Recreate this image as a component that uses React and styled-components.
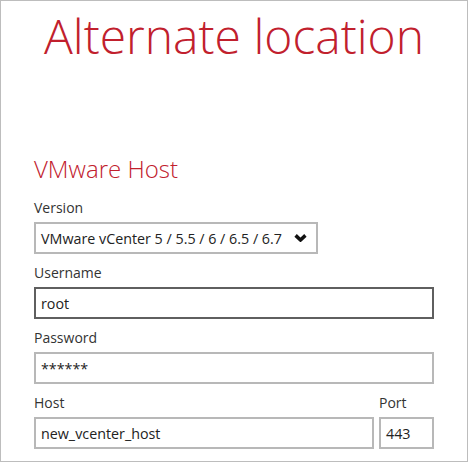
import React from "react";
import styled, { createGlobalStyle } from "styled-components";

const GlobalStyle = createGlobalStyle`
  html, body {
    margin: 0;
    padding: 0;
    background: #ffffff;
  }
  body {
    font-family: "Open Sans", "DejaVu Sans", sans-serif;
    color: #333333;
  }
`;

const Frame = styled.div`
  box-sizing: border-box;
  width: 468px;
  height: 462px;
  border: 1px solid #bdbdbd;
  padding: 7px 33px 0;
  display: flex;
  flex-direction: column;
  overflow: hidden;
`;

const Title = styled.h1`
  margin: 0;
  font-size: 48px;
  line-height: 56px;
  font-weight: 300;
  color: #c1202d;
  text-align: center;
`;

const SectionTitle = styled.h2`
  margin: 90px 0 14px;
  font-size: 24px;
  line-height: 30px;
  font-weight: 300;
  color: #c1202d;
`;

const Row = styled.div`
  display: flex;
  gap: 5px;
  margin-bottom: 9px;
`;

const Field = styled.div`
  display: flex;
  flex-direction: column;
  width: ${(p) => p.$width}px;
`;

const Label = styled.label`
  font-size: 14px;
  line-height: 20px;
  margin-bottom: 4px;
  color: #333333;
`;

const Box = styled.div`
  box-sizing: border-box;
  height: 32px;
  border: 2px solid ${(p) => (p.$focused ? "#5f5f5f" : "#b8b8b8")};
  padding: 0 5px;
  display: flex;
  align-items: center;
  justify-content: space-between;
  font-size: 14.3px;
  color: #222222;
  background: #ffffff;
`;

const ChevronIcon = styled.svg`
  margin-right: 4px;
  flex-shrink: 0;
`;

const Chevron = () => (
  <ChevronIcon width="13" height="8" viewBox="0 0 13 8">
    <polyline
      points="1.6,1.4 6.5,6 11.4,1.4"
      fill="none"
      stroke="#111111"
      strokeWidth="3.5"
    />
  </ChevronIcon>
);

const App = () => {
  return (
    <>
      <GlobalStyle />
      <Frame>
        <Title>Alternate location</Title>
        <SectionTitle>VMware Host</SectionTitle>
        <Row>
          <Field $width={284}>
            <Label>Version</Label>
            <Box>
              <span>VMware vCenter 5 / 5.5 / 6 / 6.5 / 6.7</span>
              <Chevron />
            </Box>
          </Field>
        </Row>
        <Row>
          <Field $width={400}>
            <Label>Username</Label>
            <Box $focused>root</Box>
          </Field>
        </Row>
        <Row>
          <Field $width={400}>
            <Label>Password</Label>
            <Box>******</Box>
          </Field>
        </Row>
        <Row>
          <Field $width={340}>
            <Label>Host</Label>
            <Box>new_vcenter_host</Box>
          </Field>
          <Field $width={55}>
            <Label>Port</Label>
            <Box>443</Box>
          </Field>
        </Row>
      </Frame>
    </>
  );
};

export default App;
